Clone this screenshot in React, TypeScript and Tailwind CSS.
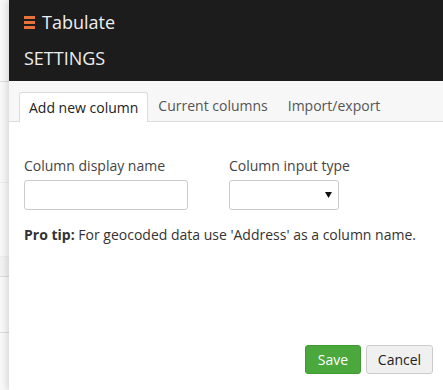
import React from "react";

const font = { fontFamily: '"Open Sans", "Liberation Sans", sans-serif' };

const MenuIcon = () => (
  <svg width="11" height="13" viewBox="0 0 11 13" className="mr-[7px]">
    <rect x="0" y="0" width="11" height="3" fill="#e8703a" />
    <rect x="0" y="5" width="11" height="3" fill="#e8703a" />
    <rect x="0" y="10" width="11" height="3" fill="#e8703a" />
  </svg>
);

const App = () => {
  const tabs = ["Add new column", "Current columns", "Import/export"];

  return (
    <div className="flex h-[390px] w-[443px] overflow-hidden bg-white text-[#333]" style={font}>
      {/* page behind the panel */}
      <div className="w-[9px] shrink-0 bg-[#f9f9f9]">
        <div className="h-[82px] border-b border-[#ddd]" />
        <div className="h-[101px] border-b border-[#eee]" />
        <div className="h-[74px] border-b border-[#eee]" />
        <div className="h-[20px] border-b border-[#ddd] bg-[#f3f3f3]" />
        <div className="h-[56px] border-b border-[#ddd]" />
      </div>

      <div className="relative flex flex-1 flex-col bg-white shadow-[-3px_0_6px_rgba(0,0,0,0.12)]">
        <div className="h-[81px] bg-[#1c1c1c] px-[15px] pt-[10px] text-[#eee]">
          <div className="flex h-[25px] items-center text-[18px]">
            <MenuIcon />
            <span>Tabulate</span>
          </div>
          <div className="mt-[12px] text-[18px] leading-[22px]">SETTINGS</div>
        </div>

        <div className="flex h-[41px] items-end border-b border-[#ddd] bg-[#f7f7f7] pl-[10px]">
          {tabs.map((t, i) => (
            <div
              key={t}
              className={
                i === 0
                  ? "-mb-px h-[30px] rounded-t-[3px] border border-b-0 border-[#ddd] bg-white px-[9px] pt-[4px] text-[14px] text-[#222]"
                  : "h-[30px] px-[10px] pt-[4px] text-[14px] text-[#555]"
              }
            >
              {t}
            </div>
          ))}
        </div>

        <div className="flex flex-1 flex-col px-[15px] pt-[34px]">
          <div className="flex gap-[41px]">
            <div className="flex flex-col">
              <label className="text-[14px] leading-[20px] text-[#444]">Column display name</label>
              <input className="mt-[4px] h-[30px] w-[164px] rounded-[3px] border border-[#ccc] bg-white" />
            </div>
            <div className="flex flex-col">
              <label className="text-[14px] leading-[20px] text-[#444]">Column input type</label>
              <div className="mt-[4px] flex h-[30px] w-[110px] items-center justify-end rounded-[3px] border border-[#ccc] bg-white pr-[6px]">
                <svg width="7" height="6" viewBox="0 0 7 6">
                  <path d="M0 0h7L3.5 6z" fill="#111" />
                </svg>
              </div>
            </div>
          </div>

          <p className="mt-[15px] text-[14px] leading-[20px] text-[#333]">
            <span className="font-bold">Pro tip:</span> For geocoded data use 'Address' as a column name.
          </p>

          <div className="mt-auto mb-[16px] -mr-[5px] flex justify-end gap-[5px]">
            <button className="h-[29px] w-[56px] rounded-[3px] border border-[#3f9a31] bg-[#4aa83d] text-[14px] text-white">
              Save
            </button>
            <button className="h-[29px] w-[67px] rounded-[3px] border border-[#ccc] bg-[#f0f0f0] text-[14px] text-[#222]">
              Cancel
            </button>
          </div>
        </div>
      </div>
    </div>
  );
};

export default App;
